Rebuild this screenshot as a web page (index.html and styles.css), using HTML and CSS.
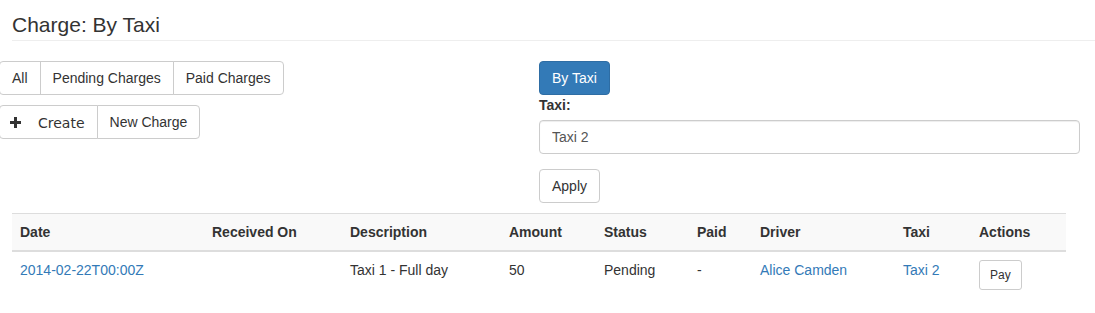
FILE: index.html
```html
<!DOCTYPE html>
<html lang="en">
<head>
  <meta charset="UTF-8" />
  <title>Charge: By Taxi</title>
  <link rel="stylesheet" href="styles.css">
</head>
<body>
  <h1 class="page-title">Charge: By Taxi</h1>

  <div class="top">
    <!-- Filters / actions -->
    <div class="left">
      <div class="btn-group">
        <button class="btn">All</button>
        <button class="btn">Pending Charges</button>
        <button class="btn">Paid Charges</button>
      </div>
      <div class="btn-group">
        <button class="btn create">
          <svg class="plus" width="11" height="11" viewBox="0 0 11 11"><path d="M4 0h3v4h4v3H7v4H4V7H0V4h4z" fill="#333"/></svg>
          <span>Create</span>
        </button>
        <button class="btn">New Charge</button>
      </div>
    </div>

    <!-- By taxi form -->
    <div class="right">
      <button class="btn btn-primary">By Taxi</button>
      <label class="label" for="taxi">Taxi:</label>
      <input class="input" id="taxi" type="text" value="Taxi 2">
      <button class="btn apply">Apply</button>
    </div>
  </div>

  <table class="charges">
    <colgroup>
      <col style="width:192px"><col style="width:138px"><col style="width:159px">
      <col style="width:95px"><col style="width:93px"><col style="width:63px">
      <col style="width:143px"><col style="width:76px"><col style="width:95px">
    </colgroup>
    <thead>
      <tr>
        <th>Date</th><th>Received On</th><th>Description</th><th>Amount</th>
        <th>Status</th><th>Paid</th><th>Driver</th><th>Taxi</th><th>Actions</th>
      </tr>
    </thead>
    <tbody>
      <tr>
        <td><a href="#">2014-02-22T00:00Z</a></td>
        <td></td>
        <td>Taxi 1 - Full day</td>
        <td>50</td>
        <td>Pending</td>
        <td>-</td>
        <td><a href="#">Alice Camden</a></td>
        <td><a href="#">Taxi 2</a></td>
        <td><button class="btn btn-sm">Pay</button></td>
      </tr>
    </tbody>
  </table>
</body>
</html>
```

FILE: styles.css
```css
body {
  font-family: "Liberation Sans", Arial, sans-serif;
  font-size: 14px;
  line-height: 20px;
  color: #333;
  margin: 0;
  background: #fff;
}
a {
  color: #337ab7;
  text-decoration: none;
}
.page-title {
  font-size: 21px;
  font-weight: normal;
  line-height: 23px;
  margin: 13px 0 0 12px;
  padding-bottom: 4px;
  border-bottom: 1px solid #eee;
}
.top {
  display: grid;
  grid-template-columns: 539px 1fr;
  padding-right: 15px;
  margin-top: 20px;
}
.left {
  display: flex;
  flex-direction: column;
  align-items: flex-start;
  gap: 10px;
  margin-left: -1px;
}
.btn-group {
  display: flex;
}
.btn-group .btn + .btn {
  margin-left: -1px;
}
.btn-group .btn:not(:first-child) {
  border-top-left-radius: 0;
  border-bottom-left-radius: 0;
}
.btn-group .btn:not(:last-child) {
  border-top-right-radius: 0;
  border-bottom-right-radius: 0;
}
.btn {
  font-family: inherit;
  font-size: 14px;
  line-height: 20px;
  height: 34px;
  padding: 6px 12px;
  color: #333;
  background: #fff;
  border: 1px solid #ccc;
  border-radius: 4px;
  cursor: pointer;
}
.create {
  display: flex;
  align-items: center;
  padding-left: 10px;
}
.create span {
  font-family: "DejaVu Sans", sans-serif;
  margin-left: 17px;
  padding-top: 2px;
}
.plus {
  display: block;
}
.right {
  display: flex;
  flex-direction: column;
  align-items: flex-start;
}
.btn-primary {
  color: #fff;
  background: #337ab7;
  border-color: #2e6da4;
}
.label {
  font-weight: bold;
  margin: 0 0 5px;
}
.input {
  box-sizing: border-box;
  width: 100%;
  height: 34px;
  padding: 6px 12px;
  font-family: inherit;
  font-size: 14px;
  color: #555;
  border: 1px solid #ccc;
  border-radius: 4px;
  box-shadow: inset 0 1px 1px rgba(0,0,0,0.075);
}
.apply {
  margin-top: 15px;
}
.charges {
  border-collapse: collapse;
  table-layout: fixed;
  width: 1054px;
  margin: 10px 0 0 12px;
}
.charges th,
.charges td {
  text-align: left;
  padding: 8px;
  vertical-align: top;
}
.charges th {
  background: #f9f9f9;
  border-top: 1px solid #ddd;
  border-bottom: 2px solid #ddd;
}
.charges td {
  height: 20px;
}
.btn-sm {
  font-size: 12px;
  line-height: 18px;
  height: 30px;
  padding: 5px 10px;
  border-radius: 3px;
}
```
